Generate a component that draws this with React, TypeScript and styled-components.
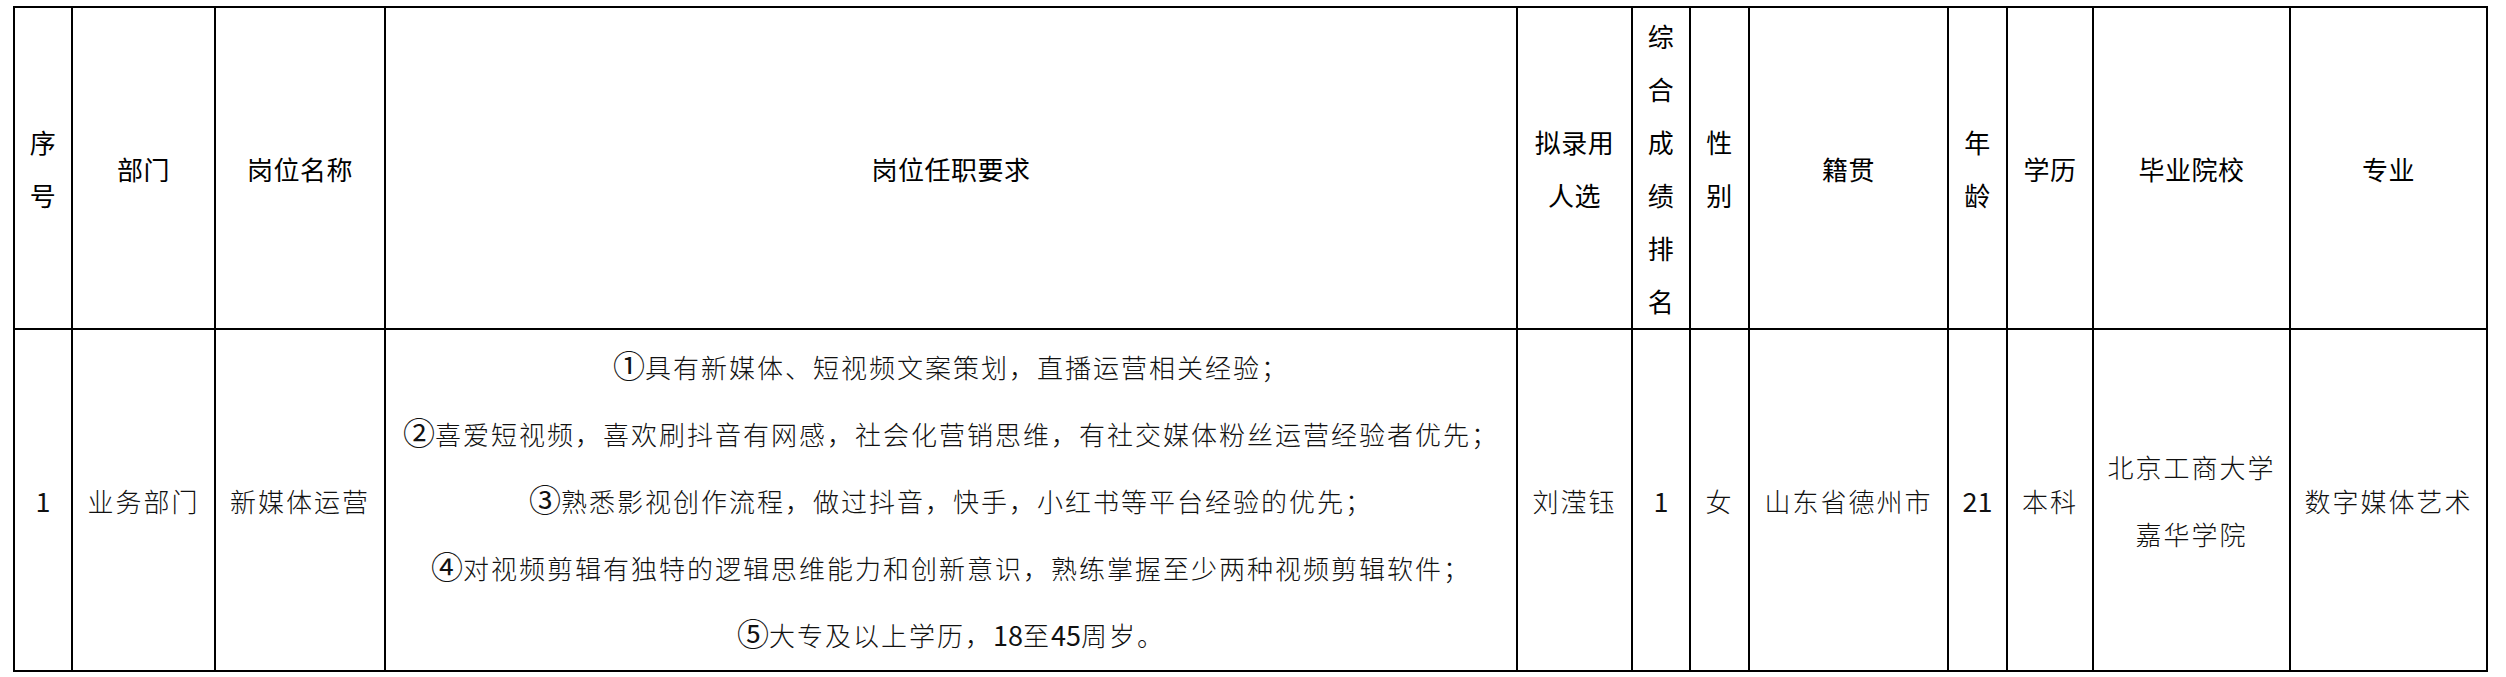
import React from "react";
import styled, { createGlobalStyle } from "styled-components";

const GlobalStyle = createGlobalStyle`
  html, body {
    margin: 0;
    padding: 0;
    background: #ffffff;
  }
  body {
    font-family: "Noto Sans CJK SC", "Noto Sans", sans-serif;
    color: #000000;
  }
`;

const Page = styled.div`
  padding: 6px 0 0 13px;
`;

const Table = styled.table`
  border-collapse: collapse;
  table-layout: fixed;
  width: 2475px;
`;

const Col = styled.col<{ $w: number }>`
  width: ${(p) => p.$w}px;
`;

const HeadRow = styled.tr`
  height: 322px;
`;

const BodyRow = styled.tr`
  height: 342px;
`;

const HeadCell = styled.th`
  border: 2px solid #000000;
  padding: 0;
  text-align: center;
  vertical-align: middle;
  font-family: "Noto Sans CJK SC", sans-serif;
  font-weight: 400;
  font-size: 26px;
  letter-spacing: 0.5px;
  line-height: 53px;
  color: #000000;
  white-space: nowrap;
`;

const BodyCell = styled.td`
  border: 2px solid #000000;
  padding: 0;
  text-align: center;
  vertical-align: middle;
  font-family: "Noto Sans CJK SC", sans-serif;
  font-weight: 300;
  font-size: 26px;
  letter-spacing: 2px;
  line-height: 67px;
  color: #111111;
  white-space: nowrap;
`;

const Num = styled.span`
  font-family: "Noto Sans CJK SC", sans-serif;
  font-weight: 400;
  font-size: 27px;
  letter-spacing: 0;
`;

const Circ = styled.span`
  font-size: 32px;
  font-weight: 400;
  letter-spacing: 0;
  line-height: 1;
`;

const ReqLine = styled.div`
  display: block;
`;

const columns = [58, 143, 170, 1132, 115, 58, 59, 199, 59, 86, 197, 197];

const requirements: { mark: string; text: React.ReactNode }[] = [
  { mark: "①", text: "具有新媒体、短视频文案策划，直播运营相关经验；" },
  {
    mark: "②",
    text: "喜爱短视频，喜欢刷抖音有网感，社会化营销思维，有社交媒体粉丝运营经验者优先；",
  },
  { mark: "③", text: "熟悉影视创作流程，做过抖音，快手，小红书等平台经验的优先；" },
  {
    mark: "④",
    text: "对视频剪辑有独特的逻辑思维能力和创新意识，熟练掌握至少两种视频剪辑软件；",
  },
  {
    mark: "⑤",
    text: (
      <>
        大专及以上学历，<Num>18</Num>至<Num>45</Num>周岁。
      </>
    ),
  },
];

export default function App() {
  return (
    <>
      <GlobalStyle />
      <Page>
        <Table>
          <colgroup>
            {columns.map((w, i) => (
              <Col key={i} $w={w} />
            ))}
          </colgroup>
          <thead>
            <HeadRow>
              <HeadCell>
                序<br />号
              </HeadCell>
              <HeadCell>部门</HeadCell>
              <HeadCell>岗位名称</HeadCell>
              <HeadCell>岗位任职要求</HeadCell>
              <HeadCell>
                拟录用
                <br />
                人选
              </HeadCell>
              <HeadCell>
                综<br />合<br />成<br />绩<br />排<br />名
              </HeadCell>
              <HeadCell>
                性<br />别
              </HeadCell>
              <HeadCell>籍贯</HeadCell>
              <HeadCell>
                年<br />龄
              </HeadCell>
              <HeadCell>学历</HeadCell>
              <HeadCell>毕业院校</HeadCell>
              <HeadCell>专业</HeadCell>
            </HeadRow>
          </thead>
          <tbody>
            <BodyRow>
              <BodyCell>
                <Num>1</Num>
              </BodyCell>
              <BodyCell>业务部门</BodyCell>
              <BodyCell>新媒体运营</BodyCell>
              <BodyCell>
                {requirements.map((r, i) => (
                  <ReqLine key={i}>
                    <Circ>{r.mark}</Circ>
                    {r.text}
                  </ReqLine>
                ))}
              </BodyCell>
              <BodyCell>刘滢钰</BodyCell>
              <BodyCell>
                <Num>1</Num>
              </BodyCell>
              <BodyCell>女</BodyCell>
              <BodyCell>山东省德州市</BodyCell>
              <BodyCell>
                <Num>21</Num>
              </BodyCell>
              <BodyCell>本科</BodyCell>
              <BodyCell>
                北京工商大学
                <br />
                嘉华学院
              </BodyCell>
              <BodyCell>数字媒体艺术</BodyCell>
            </BodyRow>
          </tbody>
        </Table>
      </Page>
    </>
  );
}
